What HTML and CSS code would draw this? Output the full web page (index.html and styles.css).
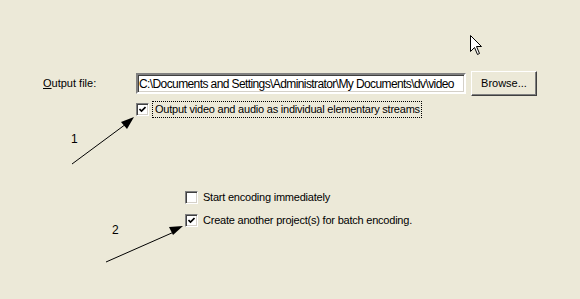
FILE: index.html
```html
<!DOCTYPE html>
<html lang="en">
<head>
    <meta charset="UTF-8">
    <title>Output settings</title>
    <link rel="stylesheet" href="styles.css">
</head>
<body>
    <div class="panel">
        <div class="file-row">
            <span class="field-label"><u>O</u>utput file:</span>
            <div class="textbox">C:\Documents and Settings\Administrator\My Documents\dv\video</div>
            <div class="button">Browse...</div>
        </div>
        <div class="check-row first">
            <span class="check on"><svg viewBox="0 0 7 7"><polyline points="0.5,3 2.5,5 6.5,1" /></svg></span>
            <span class="check-label focus">Output video and audio as individual elementary streams</span>
        </div>
        <div class="options">
            <div class="check-row">
                <span class="check"></span>
                <span class="check-label">Start encoding immediately</span>
            </div>
            <div class="check-row">
                <span class="check on"><svg viewBox="0 0 7 7"><polyline points="0.5,3 2.5,5 6.5,1" /></svg></span>
                <span class="check-label">Create another project(s) for batch encoding.</span>
            </div>
        </div>
    </div>

    <!-- annotation arrows drawn over the dialog -->
    <svg class="notes" width="580" height="299" viewBox="0 0 580 299">
        <text x="71" y="143">1</text>
        <line x1="72" y1="164" x2="126" y2="124" />
        <polygon points="134,117 121,122 127,129" />
        <text x="112" y="234">2</text>
        <line x1="106" y1="262" x2="174" y2="232" />
        <polygon points="183,226 169,227 173,235" />
    </svg>

    <svg class="cursor" width="13" height="21" viewBox="0 0 13 21">
        <path d="M0.5,0.5 L0.5,16.5 L4.5,12.5 L7.5,19.5 L9.5,18.5 L6.5,11.5 L11.5,11.5 Z" />
    </svg>
</body>
</html>
```

FILE: styles.css
```css
* { margin: 0; padding: 0; box-sizing: border-box; }
body {
    background: #ece9d8;
    font-family: "Liberation Sans", Arial, sans-serif;
    font-size: 11px;
    color: #000;
    width: 580px;
    height: 299px;
    overflow: hidden;
    position: relative;
}
.panel {
    padding: 71px 0 0 43px;
}
.file-row {
    display: flex;
    align-items: center;
    height: 25px;
}
.field-label {
    width: 93px;
    padding-bottom: 2px;
}
.textbox {
    width: 330px;
    height: 21px;
    background: #fff;
    border: 2px solid;
    border-color: #808080 #fff #fff #808080;
    box-shadow: inset 1px 1px 0 #404040, inset -1px -1px 0 #d4d0c8;
    padding: 2px 0 0 1px;
    font-size: 12px;
    letter-spacing: -0.6px;
    white-space: nowrap;
    overflow: hidden;
    margin-right: 5px;
}
.button {
    width: 66px;
    height: 25px;
    border: 1px solid;
    border-color: #fff #404040 #404040 #fff;
    box-shadow: inset -1px -1px 0 #808080;
    display: flex;
    align-items: center;
    justify-content: center;
    padding-bottom: 2px;
}
.check-row {
    display: flex;
    align-items: center;
    height: 16px;
}
.check-row.first {
    margin: 5px 0 0 93px;
}
.check {
    width: 13px;
    height: 13px;
    background: #fff;
    border: 1px solid;
    border-color: #808080 #fff #fff #808080;
    box-shadow: inset 1px 1px 0 #404040, inset -1px -1px 0 #d4d0c8;
    display: flex;
    align-items: center;
    justify-content: center;
    margin-right: 5px;
}
.check svg {
    width: 7px;
    height: 7px;
}
.check polyline {
    fill: none;
    stroke: #000;
    stroke-width: 1.6;
}
.check-label {
    padding: 1px 0 2px;
    letter-spacing: -0.22px;
    white-space: nowrap;
}
.check-label.focus {
    outline: 1px dotted #000;
    margin-left: -1px;
    padding: 1px 1px 2px 2px;
}
.options {
    margin: 72px 0 0 142px;
    display: flex;
    flex-direction: column;
    gap: 7px;
}
.notes {
    position: absolute;
    top: 0;
    left: 0;
}
.notes line {
    stroke: #000;
    stroke-width: 1;
}
.notes polygon {
    fill: #000;
}
.notes text {
    font-family: "Liberation Sans", Arial, sans-serif;
    font-size: 12px;
    fill: #000;
}
.cursor {
    position: absolute;
    left: 470px;
    top: 35px;
}
.cursor path {
    fill: #fff;
    stroke: #000;
    stroke-width: 1;
    stroke-linejoin: miter;
}
```
